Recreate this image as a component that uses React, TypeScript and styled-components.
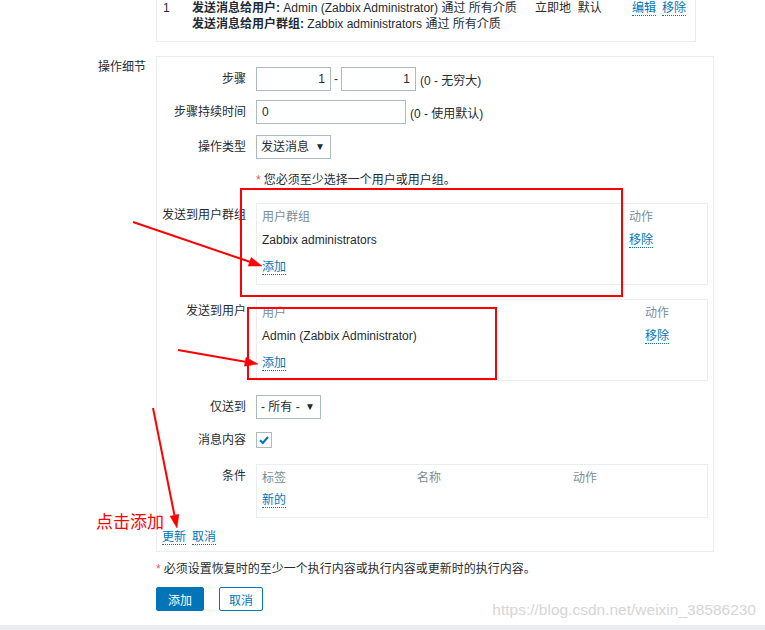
import React from 'react'
import styled, { createGlobalStyle } from 'styled-components'

const GlobalStyle = createGlobalStyle`
  html, body {
    margin: 0;
    padding: 0;
    background: #fff;
  }
  body {
    font-family: 'Liberation Sans', Arial, 'Noto Sans CJK SC', sans-serif;
    font-size: 12px;
    color: #1f2c33;
  }
`

const Page = styled.div`
  position: relative;
  width: 765px;
  height: 630px;
  overflow: hidden;
  display: flex;
  flex-direction: column;
`

const Form = styled.div`
  display: grid;
  grid-template-columns: 146px 558px;
  column-gap: 10px;
  align-items: start;
`

const OuterLabel = styled.div`
  text-align: right;
  line-height: 16px;
  padding-top: 3px;
`

const TopBox = styled.div`
  grid-column: 2;
  width: 540px;
  box-sizing: border-box;
  border: 1px solid #ebeef0;
  border-top: none;
  padding: 0 0 9px 6px;
  margin-bottom: 14px;
  display: grid;
  grid-template-columns: 29px 343px 97px auto;
  line-height: 16px;
`

const Strong = styled.span`
  font-weight: bold;
`

const Panel = styled.div`
  border: 1px solid #ebeef0;
  padding: 10px 5px 7px 0;
  box-sizing: border-box;
  width: 558px;
`

const Row = styled.div<{ $mb?: number }>`
  display: grid;
  grid-template-columns: 89px 1fr;
  column-gap: 10px;
  margin-bottom: ${p => p.$mb ?? 0}px;
`

const Label = styled.div`
  text-align: right;
  line-height: 24px;
  white-space: nowrap;
`

const Field = styled.div`
  display: flex;
  align-items: center;
  min-height: 24px;
`

const Input = styled.input<{ $w: number; $right?: boolean }>`
  box-sizing: border-box;
  width: ${p => p.$w}px;
  height: 24px;
  border: 1px solid #acbbc2;
  padding: 0 5px;
  font: inherit;
  color: #1f2c33;
  text-align: ${p => (p.$right ? 'right' : 'left')};
  outline: none;
`

const Dash = styled.span`
  margin: 0 3px;
`

const Hint = styled.span`
  margin-left: 4px;
`

const Select = styled.div<{ $w: number }>`
  box-sizing: border-box;
  width: ${p => p.$w}px;
  height: 24px;
  border: 1px solid #acbbc2;
  padding: 0 5px 0 4px;
  display: flex;
  align-items: center;
  justify-content: space-between;
  line-height: 22px;
`

const Caret = styled.span`
  font-size: 10px;
  color: #1f2c33;
`

const Note = styled.div<{ $mb?: number }>`
  line-height: 14px;
  margin-bottom: ${p => p.$mb ?? 0}px;
`

const Asterisk = styled.span`
  color: #e45959;
  margin-right: 3px;
`

const TableBox = styled.div<{ $cols: string }>`
  border: 1px solid #ebeef0;
  padding: 5px 0 9px 5px;
  display: grid;
  grid-template-columns: ${p => p.$cols};
  line-height: 16px;
`

const Head = styled.div`
  color: #768d99;
  margin-bottom: 7px;
`

const Cell = styled.div<{ $mt?: number }>`
  margin-top: ${p => p.$mt ?? 0}px;
`

const Link = styled.a`
  color: #0275b8;
  text-decoration: none;
  border-bottom: 1px dotted #0275b8;
  cursor: pointer;
  & + & {
    margin-left: 6px;
  }
`

const Checkbox = styled.span`
  box-sizing: border-box;
  width: 16px;
  height: 16px;
  border: 1px solid #acbbc2;
  display: inline-flex;
  align-items: center;
  justify-content: center;
`

const FooterLinks = styled.div`
  padding-left: 5px;
  line-height: 14px;
`

const BottomNote = styled.div`
  grid-column: 2;
  line-height: 14px;
  margin-top: 10px;
`

const Buttons = styled.div`
  grid-column: 2;
  display: flex;
  gap: 15px;
  margin-top: 11px;
`

const Button = styled.button<{ $primary?: boolean }>`
  box-sizing: border-box;
  height: 24px;
  padding: 0 ${p => (p.$primary ? 11 : 9)}px;
  font: inherit;
  border: 1px solid #0275b8;
  border-radius: 2px;
  background: ${p => (p.$primary ? '#0275b8' : '#fff')};
  color: ${p => (p.$primary ? '#fff' : '#0275b8')};
`

const Footer = styled.div`
  margin-top: auto;
  height: 5px;
  background: #ebeef0;
`

const Overlay = styled.svg`
  position: absolute;
  left: 0;
  top: 0;
  pointer-events: none;
`

const Callout = styled.span`
  position: absolute;
  left: 96px;
  top: 509px;
  font-family: 'Noto Sans CJK SC', sans-serif;
  font-size: 17px;
  line-height: 24px;
  color: #f00;
`

const Watermark = styled.span`
  position: absolute;
  right: 9px;
  top: 601px;
  font-family: 'Liberation Sans', Arial, sans-serif;
  font-size: 15.5px;
  color: #d6d6d6;
`

type ArrowProps = { x1: number; y1: number; x2: number; y2: number }

const Arrow = ({ x1, y1, x2, y2 }: ArrowProps) => {
  const len = Math.hypot(x2 - x1, y2 - y1)
  const ux = (x2 - x1) / len
  const uy = (y2 - y1) / len
  const bx = x2 - ux * 13
  const by = y2 - uy * 13
  const px = -uy * 4.5
  const py = ux * 4.5
  return (
    <g fill="#f00" stroke="#f00">
      <line x1={x1} y1={y1} x2={bx} y2={by} strokeWidth={2} />
      <polygon
        points={`${x2},${y2} ${bx + px},${by + py} ${bx - px},${by - py}`}
        strokeWidth={0.5}
      />
    </g>
  )
}

export default function App() {
  return (
    <Page>
      <GlobalStyle />
      <Form>
        <TopBox>
          <div>1</div>
          <div>
            <Strong>发送消息给用户:</Strong> Admin (Zabbix Administrator) 通过 所有介质
            <br />
            <Strong>发送消息给用户群组:</Strong> Zabbix administrators 通过 所有介质
          </div>
          <div>立即地&nbsp; 默认</div>
          <div>
            <Link>编辑</Link>
            <Link>移除</Link>
          </div>
        </TopBox>

        <OuterLabel>操作细节</OuterLabel>
        <Panel>
          <Row $mb={9}>
            <Label>步骤</Label>
            <Field>
              <Input $w={75} $right defaultValue="1" />
              <Dash>-</Dash>
              <Input $w={75} $right defaultValue="1" />
              <Hint>(0 - 无穷大)</Hint>
            </Field>
          </Row>
          <Row $mb={11}>
            <Label>步骤持续时间</Label>
            <Field>
              <Input $w={150} defaultValue="0" />
              <Hint>(0 - 使用默认)</Hint>
            </Field>
          </Row>
          <Row $mb={14}>
            <Label>操作类型</Label>
            <Field>
              <Select $w={75}>
                发送消息 <Caret>▼</Caret>
              </Select>
            </Field>
          </Row>
          <Row>
            <div />
            <Note $mb={16}>
              <Asterisk>*</Asterisk>您必须至少选择一个用户或用户组。
            </Note>
          </Row>
          <Row $mb={14}>
            <Label>发送到用户群组</Label>
            <TableBox $cols="367px 1fr">
              <Head>用户群组</Head>
              <Head>动作</Head>
              <Cell>Zabbix administrators</Cell>
              <Cell>
                <Link>移除</Link>
              </Cell>
              <Cell $mt={11}>
                <Link>添加</Link>
              </Cell>
            </TableBox>
          </Row>
          <Row $mb={14}>
            <Label>发送到用户</Label>
            <TableBox $cols="383px 1fr">
              <Head>用户</Head>
              <Head>动作</Head>
              <Cell>Admin (Zabbix Administrator)</Cell>
              <Cell>
                <Link>移除</Link>
              </Cell>
              <Cell $mt={11}>
                <Link>添加</Link>
              </Cell>
            </TableBox>
          </Row>
          <Row $mb={9}>
            <Label>仅送到</Label>
            <Field>
              <Select $w={65}>
                - 所有 - <Caret>▼</Caret>
              </Select>
            </Field>
          </Row>
          <Row $mb={12}>
            <Label>消息内容</Label>
            <Field>
              <Checkbox>
                <svg width="12" height="12" viewBox="0 0 12 12">
                  <path d="M2 6.2 L4.8 9 L10 3" fill="none" stroke="#0275b8" strokeWidth="2" />
                </svg>
              </Checkbox>
            </Field>
          </Row>
          <Row $mb={12}>
            <Label>条件</Label>
            <TableBox $cols="155px 156px 1fr">
              <Head>标签</Head>
              <Head>名称</Head>
              <Head>动作</Head>
              <Cell $mt={-1}>
                <Link>新的</Link>
              </Cell>
            </TableBox>
          </Row>
          <FooterLinks>
            <Link>更新</Link>
            <Link>取消</Link>
          </FooterLinks>
        </Panel>

        <BottomNote>
          <Asterisk>*</Asterisk>必须设置恢复时的至少一个执行内容或执行内容或更新时的执行内容。
        </BottomNote>
        <Buttons>
          <Button $primary>添加</Button>
          <Button>取消</Button>
        </Buttons>
      </Form>
      <Footer />

      <Overlay width="765" height="630" viewBox="0 0 765 630">
        <rect x="241" y="189" width="381" height="107" fill="none" stroke="#f00" strokeWidth="2" />
        <rect x="248" y="308" width="248" height="71" fill="none" stroke="#f00" strokeWidth="2" />
        <Arrow x1={133} y1={222} x2={262} y2={266} />
        <Arrow x1={178} y1={350} x2={258} y2={364} />
        <Arrow x1={153} y1={408} x2={177} y2={528} />
      </Overlay>
      <Callout>点击添加</Callout>
      <Watermark>https://blog.csdn.net/weixin_38586230</Watermark>
    </Page>
  )
}
